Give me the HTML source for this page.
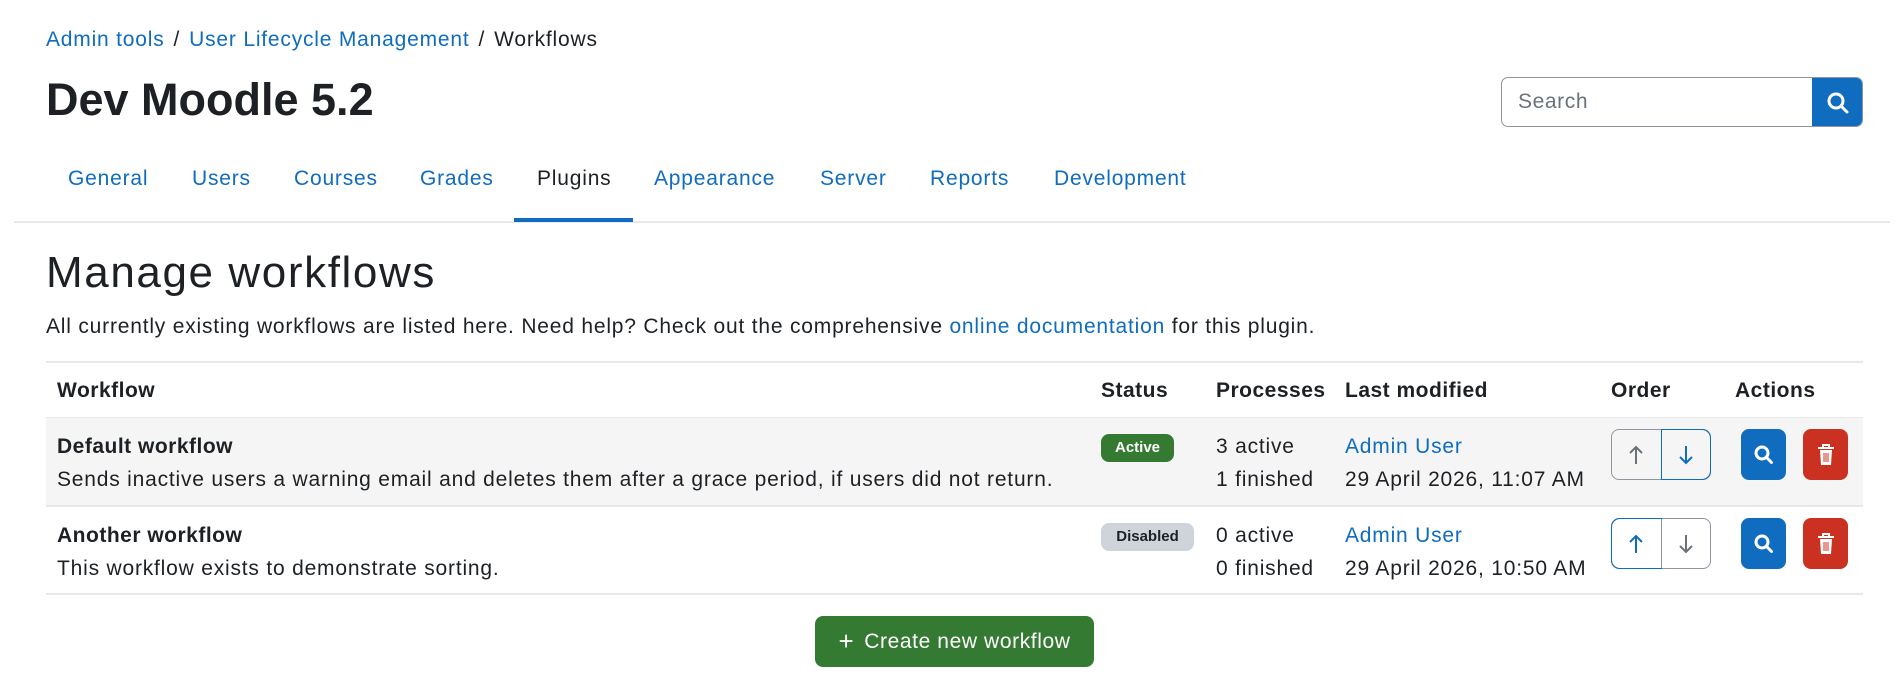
<!DOCTYPE html>
<html><head><meta charset="utf-8"><style>
*{box-sizing:border-box;margin:0;padding:0}
body{width:1904px;height:688px;background:#fff;font-family:"Liberation Sans",sans-serif;color:#1d2125;position:relative;overflow:hidden}
a{color:#0f6cbf;text-decoration:none}
.abs{position:absolute;white-space:nowrap}
.bc{top:28px;left:46px;font-size:21px;letter-spacing:0.8px}
.bc span{color:#1d2125;margin:0 9px}
h1{position:absolute;top:73px;left:46px;font-size:45px;font-weight:bold;line-height:54px}
.search{position:absolute;left:1501px;top:77px;width:362px;height:50px;border:1px solid #8f959e;border-radius:7px;overflow:hidden}
.search div{position:absolute;left:16px;top:12px;font-size:21px;letter-spacing:0.6px;color:#6a737b}
.search b{position:absolute;right:0;top:-1px;width:50px;height:50px;background:#0f6cbf}
.nav{top:167px;font-size:21px;letter-spacing:0.8px}
.navline{position:absolute;left:14px;right:14px;top:221px;height:2px;background:#e6e8ea}
.navact{position:absolute;left:514px;width:119px;top:218px;height:4px;background:#0f6cbf}
h2{position:absolute;top:247px;left:46px;font-size:44px;font-weight:normal;line-height:52px;letter-spacing:1.6px}
.desc{top:315px;left:46px;font-size:21px;letter-spacing:0.8px}
.tb{position:absolute;left:46px;width:1817px;height:2px;background:#e6e8ea}
.th{top:379px;font-size:21px;font-weight:bold;letter-spacing:0.5px}
.r1{position:absolute;left:46px;width:1817px;top:418px;height:88px;background:#f5f5f5}
.td{font-size:21px;letter-spacing:0.8px}
.badge{position:absolute;height:28px;border-radius:8px;font-size:15px;font-weight:bold;line-height:28px;text-align:center}
.ord{position:absolute;width:100px;height:51px;border-radius:8px;border:1px solid #8f959e;display:flex}
.ord div{flex:1;display:flex;align-items:center;justify-content:center}
.ib{position:absolute;width:45px;height:51px;border-radius:8px;display:flex;align-items:center;justify-content:center}
.btn{position:absolute;left:815px;top:616px;width:279px;height:51px;background:#357a32;border-radius:8px;color:#fff;font-size:21px;letter-spacing:0.6px;line-height:51px;text-align:center}
</style></head><body>
<div class="abs bc"><a>Admin tools</a><span>/</span><a>User Lifecycle Management</a><span>/</span>Workflows</div>
<h1>Dev Moodle 5.2</h1>
<div class="search"><div>Search</div><b><svg width="50" height="50" viewBox="0 0 50 50"><circle cx="24" cy="24" r="7" fill="none" stroke="#fff" stroke-width="3"/><path d="M29 29l6 6" stroke="#fff" stroke-width="3" stroke-linecap="round"/></svg></b></div>
<a class="abs nav" style="left:68px">General</a>
<a class="abs nav" style="left:192px">Users</a>
<a class="abs nav" style="left:294px">Courses</a>
<a class="abs nav" style="left:420px">Grades</a>
<div class="abs nav" style="left:537px">Plugins</div>
<a class="abs nav" style="left:654px">Appearance</a>
<a class="abs nav" style="left:820px">Server</a>
<a class="abs nav" style="left:930px">Reports</a>
<a class="abs nav" style="left:1054px">Development</a>
<div class="navline"></div><div class="navact"></div>
<h2>Manage workflows</h2>
<div class="abs desc">All currently existing workflows are listed here. Need help? Check out the comprehensive <a>online documentation</a> for this plugin.</div>
<div class="tb" style="top:361px"></div>
<div class="abs th" style="left:57px">Workflow</div>
<div class="abs th" style="left:1101px">Status</div>
<div class="abs th" style="left:1216px">Processes</div>
<div class="abs th" style="left:1345px">Last modified</div>
<div class="abs th" style="left:1611px">Order</div>
<div class="abs th" style="left:1735px">Actions</div>
<div class="tb" style="top:417px"></div>
<div class="r1"></div>
<div class="tb" style="top:505px"></div>
<div class="tb" style="top:593px"></div>
<div class="abs td" style="left:57px;top:435px;font-weight:bold;letter-spacing:0.5px">Default workflow</div>
<div class="abs td" style="left:57px;top:468px">Sends inactive users a warning email and deletes them after a grace period, if users did not return.</div>
<div class="badge" style="left:1101px;top:434px;width:73px;background:#357a32;color:#fff">Active</div>
<div class="abs td" style="left:1216px;top:435px">3 active</div>
<div class="abs td" style="left:1216px;top:468px">1 finished</div>
<a class="abs td" style="left:1345px;top:435px">Admin User</a>
<div class="abs td" style="left:1345px;top:468px">29 April 2026, 11:07 AM</div>
<div class="ord" style="left:1611px;top:429px"><div style="border-right:1px solid #0f6cbf"><svg width="20" height="24"><path d="M10 21V4M4 10l6-6 6 6" fill="none" stroke="#6a737b" stroke-width="2"/></svg></div><div style="outline:1px solid #0f6cbf;border-radius:0 8px 8px 0"><svg width="20" height="24"><path d="M10 3v17M4 14l6 6 6-6" fill="none" stroke="#0f6cbf" stroke-width="2"/></svg></div></div>
<div class="ib" style="left:1741px;top:429px;background:#0f6cbf"><svg width="24" height="24"><circle cx="10" cy="10" r="6" fill="none" stroke="#fff" stroke-width="3"/><path d="M14.5 14.5l5 5" stroke="#fff" stroke-width="3" stroke-linecap="round"/></svg></div>
<div class="ib" style="left:1803px;top:429px;background:#ca3120"><svg width="20" height="24"><path d="M2 5h16M7 5V2h6v3" fill="none" stroke="#fff" stroke-width="2"/><path d="M4 7h12l-1 15H5z" fill="#fff"/><path d="M8 10v9M10 10v9M12 10v9" stroke="#ca3120" stroke-width="1"/></svg></div>
<div class="abs td" style="left:57px;top:524px;font-weight:bold;letter-spacing:0.5px">Another workflow</div>
<div class="abs td" style="left:57px;top:557px">This workflow exists to demonstrate sorting.</div>
<div class="badge" style="left:1101px;top:523px;width:93px;background:#ced4da;color:#1d2125">Disabled</div>
<div class="abs td" style="left:1216px;top:524px">0 active</div>
<div class="abs td" style="left:1216px;top:557px">0 finished</div>
<a class="abs td" style="left:1345px;top:524px">Admin User</a>
<div class="abs td" style="left:1345px;top:557px">29 April 2026, 10:50 AM</div>
<div class="ord" style="left:1611px;top:518px"><div style="outline:1px solid #0f6cbf;border-radius:8px 0 0 8px"><svg width="20" height="24"><path d="M10 21V4M4 10l6-6 6 6" fill="none" stroke="#0f6cbf" stroke-width="2"/></svg></div><div style="border-left:1px solid #8f959e"><svg width="20" height="24"><path d="M10 3v17M4 14l6 6 6-6" fill="none" stroke="#6a737b" stroke-width="2"/></svg></div></div>
<div class="ib" style="left:1741px;top:518px;background:#0f6cbf"><svg width="24" height="24"><circle cx="10" cy="10" r="6" fill="none" stroke="#fff" stroke-width="3"/><path d="M14.5 14.5l5 5" stroke="#fff" stroke-width="3" stroke-linecap="round"/></svg></div>
<div class="ib" style="left:1803px;top:518px;background:#ca3120"><svg width="20" height="24"><path d="M2 5h16M7 5V2h6v3" fill="none" stroke="#fff" stroke-width="2"/><path d="M4 7h12l-1 15H5z" fill="#fff"/><path d="M8 10v9M10 10v9M12 10v9" stroke="#ca3120" stroke-width="1"/></svg></div>
<div class="btn"><span style="font-size:26px;vertical-align:-2px;margin-right:10px">+</span>Create new workflow</div>
</body></html>
